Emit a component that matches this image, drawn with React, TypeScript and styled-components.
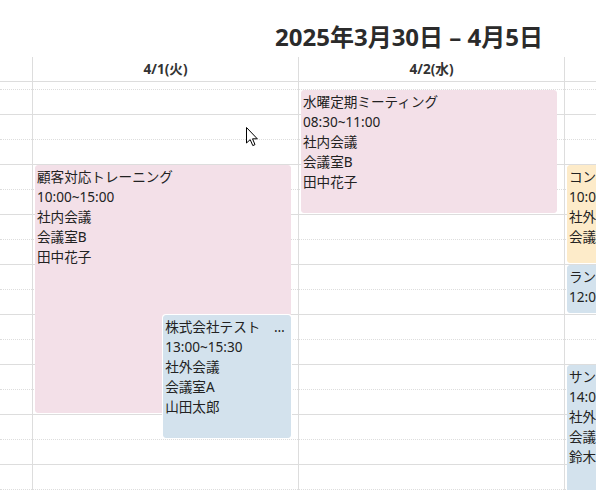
import styled, { createGlobalStyle } from 'styled-components';

const GlobalStyle = createGlobalStyle`
  html, body {
    margin: 0;
    padding: 0;
    background: #fff;
    overflow: hidden;
  }
  body {
    font-family: 'Noto Sans', 'Noto Sans CJK JP', sans-serif;
    color: #222;
  }
`;

const HOUR = 50;
const DAY_START = 8;
const COLS = '32px repeat(3, 266px)';

type CalEvent = {
  title: string;
  lines: string[];
  start: number;
  end: number;
  color: string;
  inset?: number;
};

const PINK = '#f3e0e8';
const BLUE = '#d3e2ed';
const ORANGE = '#fdebc9';

const days: { label: string; events: CalEvent[] }[] = [
  {
    label: '4/1(火)',
    events: [
      {
        title: '顧客対応トレーニング',
        lines: ['10:00~15:00', '社内会議', '会議室B', '田中花子'],
        start: 10,
        end: 15,
        color: PINK,
      },
      {
        title: '株式会社テスト　打ち合わせ',
        lines: ['13:00~15:30', '社外会議', '会議室A', '山田太郎'],
        start: 13,
        end: 15.5,
        color: BLUE,
        inset: 50,
      },
    ],
  },
  {
    label: '4/2(水)',
    events: [
      {
        title: '水曜定期ミーティング',
        lines: ['08:30~11:00', '社内会議', '会議室B', '田中花子'],
        start: 8.5,
        end: 11,
        color: PINK,
      },
    ],
  },
  {
    label: '4/3(木)',
    events: [
      {
        title: 'コンサルティング',
        lines: ['10:00~12:00', '社外会議', '会議室C'],
        start: 10,
        end: 12,
        color: ORANGE,
      },
      {
        title: 'ランチミーティング',
        lines: ['12:00~13:00'],
        start: 12,
        end: 13,
        color: BLUE,
      },
      {
        title: 'サンプル商談',
        lines: ['14:00~17:00', '社外会議', '会議室A', '鈴木一郎'],
        start: 14,
        end: 17,
        color: BLUE,
      },
    ],
  },
];

const slots = Array.from({ length: 20 }, (_, i) => i);

const App = () => {
  return (
    <Page>
      <GlobalStyle />
      <Toolbar>
        <Title>2025年3月30日 – 4月5日</Title>
      </Toolbar>
      <HeaderRow>
        <AxisCell />
        {days.map((d) => (
          <HeadCell key={d.label}>{d.label}</HeadCell>
        ))}
      </HeaderRow>
      <Body>
        <Canvas>
          <Slots>
            {slots.map((i) => (
              <Slot key={i} $minor={i % 2 === 1} />
            ))}
          </Slots>
          <Columns>
            <AxisCol />
            {days.map((d) => (
              <DayCol key={d.label}>
                <Harness>
                  {d.events.map((ev) => (
                    <Event
                      key={ev.title}
                      $top={(ev.start - DAY_START) * HOUR + 1}
                      $height={(ev.end - ev.start) * HOUR - 2}
                      $bg={ev.color}
                      $inset={ev.inset ?? 0}
                    >
                      <EventTitle>{ev.title}</EventTitle>
                      {ev.lines.map((l, i) => (
                        <EventLine key={i}>{l}</EventLine>
                      ))}
                    </Event>
                  ))}
                </Harness>
              </DayCol>
            ))}
          </Columns>
        </Canvas>
      </Body>
      <Cursor width="13" height="20" viewBox="0 0 13 20">
        <path
          d="M0.5 0.5 L0.5 16 L4.2 12.6 L6.8 18.6 L9 17.6 L6.5 11.8 L11.3 11.8 Z"
          fill="#fff"
          stroke="#000"
          strokeWidth="1"
        />
      </Cursor>
    </Page>
  );
};

const Page = styled.div`
  position: relative;
  width: 596px;
  height: 490px;
  overflow: hidden;
`;

const Toolbar = styled.div`
  height: 57px;
  box-sizing: border-box;
  padding: 22px 0 0 275px;
`;

const Title = styled.h2`
  margin: 0;
  font-size: 24px;
  line-height: 30px;
  font-weight: 700;
  color: #2b2b2b;
  white-space: nowrap;
`;

const HeaderRow = styled.div`
  display: grid;
  grid-template-columns: ${COLS};
  height: 25px;
  box-sizing: border-box;
  border-bottom: 1px solid #ddd;
`;

const AxisCell = styled.div``;

const HeadCell = styled.div`
  border-left: 1px solid #ddd;
  text-align: center;
  font-size: 13.6px;
  font-weight: 700;
  line-height: 24px;
  color: #333;
  white-space: nowrap;
  overflow: hidden;
`;

const Body = styled.div`
  height: 408px;
  overflow: hidden;
`;

const Canvas = styled.div`
  display: grid;
  margin-top: -18px;
`;

const Slots = styled.div`
  grid-area: 1 / 1;
  display: flex;
  flex-direction: column;
`;

const Slot = styled.div<{ $minor: boolean }>`
  height: 25px;
  box-sizing: border-box;
  border-top: 1px ${({ $minor }) => ($minor ? 'dotted' : 'solid')} #ddd;
`;

const Columns = styled.div`
  grid-area: 1 / 1;
  display: grid;
  grid-template-columns: ${COLS};
`;

const AxisCol = styled.div``;

const DayCol = styled.div`
  border-left: 1px solid #ddd;
`;

const Harness = styled.div`
  position: relative;
  height: 100%;
  margin: 0 2.5% 0 2px;
`;

const Event = styled.div<{ $top: number; $height: number; $bg: string; $inset: number }>`
  position: absolute;
  top: ${({ $top }) => $top}px;
  height: ${({ $height }) => $height}px;
  left: ${({ $inset }) => $inset}%;
  right: 0;
  box-sizing: border-box;
  background: ${({ $bg }) => $bg};
  border: 1px solid ${({ $bg }) => $bg};
  border-radius: 3px;
  padding: 1px 1px 0;
  overflow: hidden;
  font-size: 13.6px;
  line-height: 20px;
  color: #222;
  box-shadow: ${({ $inset }) => ($inset ? '0 0 0 1px #fff' : 'none')};
`;

const EventTitle = styled.div`
  white-space: nowrap;
  overflow: hidden;
  text-overflow: ellipsis;
`;

const EventLine = styled.div`
  white-space: nowrap;
`;

const Cursor = styled.svg`
  position: absolute;
  left: 246px;
  top: 127px;
`;

export default App;
